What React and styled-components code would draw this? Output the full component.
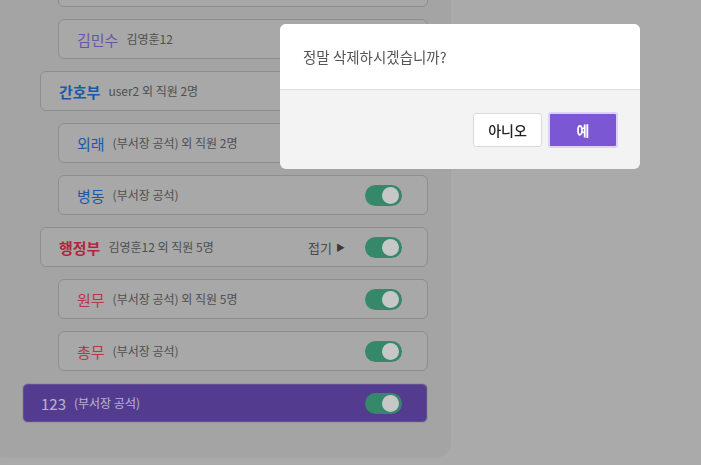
import styled, { createGlobalStyle } from "styled-components";

const ROWS = [
  { id: "top", level: 2, name: "", sub: "", tone: "purple" },
  { id: "kms", level: 2, name: "김민수", sub: "김영훈12", tone: "purple" },
  { id: "nurse", level: 1, name: "간호부", sub: "user2 외 직원 2명", tone: "blue", bold: true },
  { id: "out", level: 2, name: "외래", sub: "(부서장 공석) 외 직원 2명", tone: "blue" },
  { id: "ward", level: 2, name: "병동", sub: "(부서장 공석)", tone: "blue", toggle: true },
  { id: "admin", level: 1, name: "행정부", sub: "김영훈12 외 직원 5명", tone: "red", bold: true, fold: true, toggle: true },
  { id: "won", level: 2, name: "원무", sub: "(부서장 공석) 외 직원 5명", tone: "rose", toggle: true },
  { id: "gen", level: 2, name: "총무", sub: "(부서장 공석)", tone: "rose", toggle: true },
  { id: "123", level: 0, name: "123", sub: "(부서장 공석)", tone: "light", toggle: true, selected: true },
];

const TONES = {
  purple: "#866ad2",
  blue: "#2471d2",
  red: "#dc324f",
  rose: "#e2475e",
  light: "#e6e1ff",
};

export default function App() {
  return (
    <>
      <GlobalStyle />
      <Page>
        <Panel>
          {ROWS.map((r) => (
            <Row key={r.id} $level={r.level} $selected={r.selected}>
              <Name $tone={TONES[r.tone]} $bold={r.bold}>{r.name}</Name>
              <Sub $light={r.selected}>{r.sub}</Sub>
              <Spacer />
              {r.fold && (
                <Fold>
                  접기 <Arrow>▶</Arrow>
                </Fold>
              )}
              {r.toggle && (
                <Toggle>
                  <Knob />
                </Toggle>
              )}
            </Row>
          ))}
        </Panel>
      </Page>
      <Dim />
      <Dialog>
        <DialogBody>정말 삭제하시겠습니까?</DialogBody>
        <DialogFooter>
          <Btn>아니오</Btn>
          <Btn $primary>예</Btn>
        </DialogFooter>
      </Dialog>
    </>
  );
}

const GlobalStyle = createGlobalStyle`
  html, body {
    margin: 0;
    padding: 0;
    background: #d5d5d5;
    font-family: "Noto Sans CJK KR", "Noto Sans", sans-serif;
    overflow: hidden;
  }
`;

const Page = styled.div`
  width: 701px;
  height: 465px;
  background: #d5d5d5;
  overflow: hidden;
`;

const Panel = styled.div`
  width: 406px;
  margin: -61px 0 0 -10px;
  padding: 28px 23px 35px 32px;
  background: #cdcdcd;
  border-radius: 16px;
  display: flex;
  flex-direction: column;
  gap: 12px;
`;

const Row = styled.div`
  height: 40px;
  box-sizing: border-box;
  margin-left: ${(p) => p.$level * 18}px;
  padding: 0 25px 0 18px;
  display: flex;
  align-items: center;
  border-radius: 6px;
  border: 1px solid ${(p) => (p.$selected ? "#bdbdbd" : "#b2b2b2")};
  background: ${(p) => (p.$selected ? "#684bb3" : "#d2d2d2")};
  box-shadow: ${(p) => (p.$selected ? "inset 0 0 0 1px #7a63b8" : "none")};
`;

const Name = styled.span`
  font-size: 15px;
  font-weight: ${(p) => (p.$bold ? 700 : 400)};
  color: ${(p) => p.$tone};
  margin-right: 8px;
  line-height: 1;
`;

const Sub = styled.span`
  font-size: 12px;
  color: ${(p) => (p.$light ? "#e6e1ff" : "#646464")};
  line-height: 1;
`;

const Spacer = styled.div`
  flex: 1;
`;

const Fold = styled.span`
  font-size: 13px;
  color: #5c5c5c;
  margin-right: 20px;
  display: flex;
  align-items: center;
  gap: 4px;
`;

const Arrow = styled.span`
  font-size: 9px;
  color: #484848;
`;

const Toggle = styled.div`
  width: 37px;
  height: 21px;
  border-radius: 11px;
  background: #44ab85;
  position: relative;
`;

const Knob = styled.div`
  position: absolute;
  right: 3px;
  top: 2px;
  width: 17px;
  height: 17px;
  border-radius: 50%;
  background: #f9f9f9;
`;

const Dim = styled.div`
  position: fixed;
  inset: 0;
  background: rgba(0, 0, 0, 0.2);
`;

const Dialog = styled.div`
  position: fixed;
  top: 24px;
  left: 280px;
  width: 360px;
  border-radius: 6px;
  overflow: hidden;
  background: #f3f3f3;
`;

const DialogBody = styled.div`
  height: 66px;
  box-sizing: border-box;
  padding: 0 23px;
  display: flex;
  align-items: center;
  background: #fff;
  border-bottom: 1px solid #dcdcdc;
  font-size: 14.5px;
  color: #555;
`;

const DialogFooter = styled.div`
  height: 79px;
  box-sizing: border-box;
  padding: 0 22px;
  display: flex;
  align-items: center;
  justify-content: flex-end;
  gap: 6px;
`;

const Btn = styled.button`
  width: ${(p) => (p.$primary ? "70px" : "69px")};
  height: ${(p) => (p.$primary ? "36px" : "34px")};
  border-radius: 3px;
  font-family: inherit;
  font-size: 14px;
  font-weight: ${(p) => (p.$primary ? 700 : 500)};
  border: ${(p) => (p.$primary ? "2px solid #ddd3f5" : "1px solid #dadada")};
  background: ${(p) => (p.$primary ? "#7b57d3" : "#fff")};
  color: ${(p) => (p.$primary ? "#fff" : "#222")};
  cursor: pointer;
`;
